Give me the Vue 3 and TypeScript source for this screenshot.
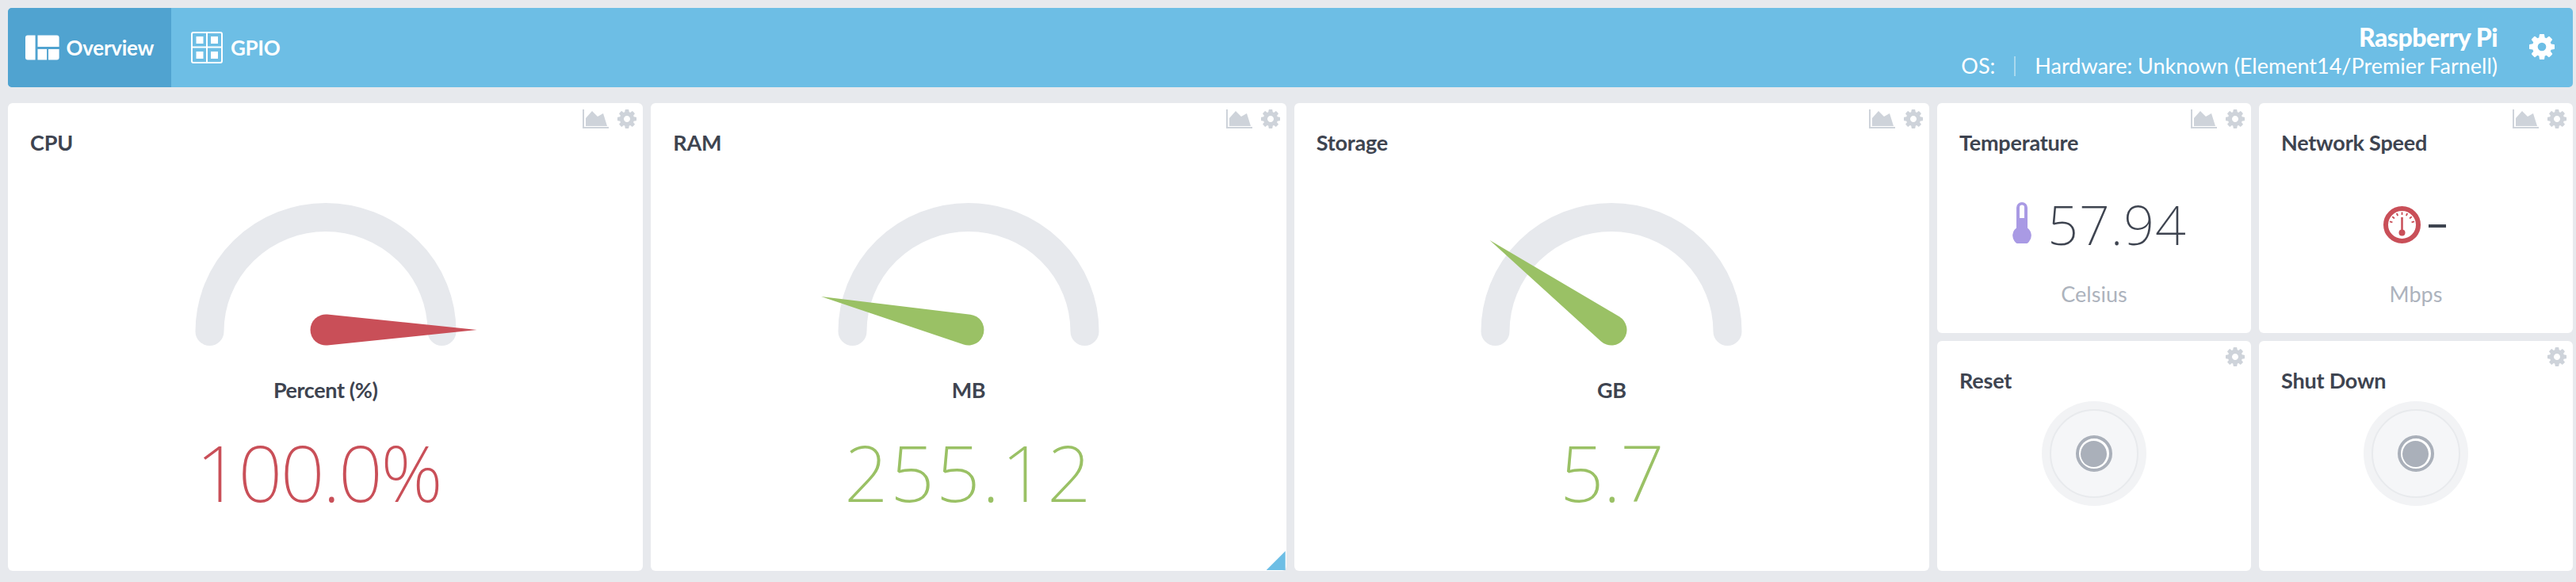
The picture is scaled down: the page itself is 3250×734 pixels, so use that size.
<script setup lang="ts">
const cog =
  'M1152 896q0-106-75-181t-181-75-181 75-75 181 75 181 181 75 181-75 75-181zm512-109v222q0 12-8 23t-20 13l-185 28q-19 54-39 91 35 50 107 138 10 12 10 25t-9 23q-27 37-99 108t-94 71q-12 0-26-9l-138-108q-44 23-91 38-16 136-29 186-7 28-36 28h-222q-14 0-24.500-8.500t-11.500-21.500l-28-184q-49-16-90-37l-141 107q-10 9-25 9-14 0-25-11-126-114-165-168-7-10-7-23 0-12 8-23 15-21 51-66.500t54-70.500q-27-50-41-99l-183-27q-13-2-21-12.500t-8-23.500v-222q0-12 8-23t19-13l186-28q14-46 39-92-40-57-107-138-10-12-10-24 0-10 9-23 26-36 98.500-107.500t94.500-71.500q13 0 26 10l138 107q44-23 91-38 16-136 29-186 7-28 36-28h222q14 0 24.500 8.500t11.500 21.500l28 184q49 16 90 37l142-107q9-9 24-9 13 0 25 10 129 119 165 170 7 8 7 22 0 12-8 23-15 21-51 66.500t-54 70.500q26 50 41 98l183 28q13 2 21 12.500t8 23.500z';

// tracking and nudge make up for the digit widths of the stand-in font
const gauges = [
  { title: 'CPU', unit: 'Percent (%)', value: '100.0%', angle: 0, color: '#c94f58', corner: false, tracking: -2.6, nudge: 18 },
  { title: 'RAM', unit: 'MB', value: '255.12', angle: 192.7, color: '#9ac165', corner: true, tracking: 2, nudge: 0 },
  { title: 'Storage', unit: 'GB', value: '5.7', angle: 216.4, color: '#9ac165', corner: false, tracking: -1, nudge: 0 }
];

const buttons = ['Reset', 'Shut Down'];

const dialTicks = [-75, -50, -25, 0, 25, 50, 75];
</script>

<template>
  <div class="page">
    <header class="topbar">
      <div class="tab tab_active">
        <svg class="tab_icon_overview" viewBox="0 0 44 32">
          <path d="M3 0h10v32H3a3 3 0 0 1-3-3V3a3 3 0 0 1 3-3z" />
          <path d="M16 0h25a3 3 0 0 1 3 3v12H16z" />
          <rect x="16" y="18" width="12" height="14" />
          <path d="M30 18h14v11a3 3 0 0 1-3 3H30z" />
        </svg>
        <span>Overview</span>
      </div>
      <div class="tab">
        <svg class="tab_icon_gpio" viewBox="0 0 40 40">
          <rect x="1" y="1" width="38" height="38" rx="2" fill="none" stroke="#fff" stroke-width="2" />
          <path d="M20 1v38M1 19.500h38" stroke="#fff" stroke-width="2" />
          <rect x="6.500" y="6" width="9" height="9" fill="#fff" />
          <rect x="25" y="6" width="9" height="9" fill="#fff" />
          <rect x="6.500" y="25" width="9" height="9" fill="#fff" />
          <rect x="25" y="25" width="9" height="9" fill="#fff" />
        </svg>
        <span>GPIO</span>
      </div>
      <div class="device">
        <div class="device_name">Raspberry Pi</div>
        <div class="device_meta">
          <span>OS:</span>
          <i class="device_sep"></i>
          <span>Hardware: Unknown (Element14/Premier Farnell)</span>
        </div>
      </div>
      <svg class="topbar_cog" viewBox="128 128 1536 1536"><path :d="cog" /></svg>
    </header>

    <main class="grid">
      <section v-for="g in gauges" :key="g.title" class="card card_big">
        <div class="tools">
          <svg class="tool_chart" viewBox="0 0 33 24">
            <path d="M0 0h2v22h31v2H0z" />
            <path d="M4 21V11l8-9 7 7 7-4 5 16z" />
          </svg>
          <svg class="tool_cog" viewBox="128 128 1536 1536"><path :d="cog" /></svg>
        </div>
        <h2 class="card_title">{{ g.title }}</h2>
        <svg class="gauge" viewBox="0 0 400 200">
          <path d="M53.500 172A146.500 144 0 0 1 346.500 172" fill="none" stroke="#e7e9ed" stroke-width="36" stroke-linecap="round" />
          <path
            d="M190.600 0L2 -19.400A19.500 19.500 0 1 0 2 19.400Z"
            :fill="g.color"
            :transform="`translate(200 170) rotate(${g.angle})`"
          />
        </svg>
        <div class="gauge_unit">{{ g.unit }}</div>
        <div
          class="gauge_value"
          :style="{ color: g.color, letterSpacing: `${g.tracking}px`, marginRight: `${g.nudge}px` }"
        >
          {{ g.value }}
        </div>
        <i v-if="g.corner" class="resize"></i>
      </section>

      <section class="card">
        <div class="tools">
          <svg class="tool_chart" viewBox="0 0 33 24">
            <path d="M0 0h2v22h31v2H0z" />
            <path d="M4 21V11l8-9 7 7 7-4 5 16z" />
          </svg>
          <svg class="tool_cog" viewBox="128 128 1536 1536"><path :d="cog" /></svg>
        </div>
        <h2 class="card_title">Temperature</h2>
        <div class="stat stat_temp">
          <svg class="stat_thermo" viewBox="0 0 24 52">
            <path d="M12 0a7 7 0 0 1 7 7v25.500a11.800 11.800 0 1 1-14 0V7a7 7 0 0 1 7-7z" fill="#a99ae4" />
            <path d="M9 20V6.500a3 3 0 0 1 6 0V20z" fill="#fff" />
          </svg>
          <span class="stat_value">57.94</span>
        </div>
        <div class="stat_unit">Celsius</div>
      </section>

      <section class="card">
        <div class="tools">
          <svg class="tool_chart" viewBox="0 0 33 24">
            <path d="M0 0h2v22h31v2H0z" />
            <path d="M4 21V11l8-9 7 7 7-4 5 16z" />
          </svg>
          <svg class="tool_cog" viewBox="128 128 1536 1536"><path :d="cog" /></svg>
        </div>
        <h2 class="card_title">Network Speed</h2>
        <div class="stat stat_net">
          <svg class="stat_dial" viewBox="0 0 47 47">
            <circle cx="23.500" cy="23.500" r="20.500" fill="none" stroke="#c94f58" stroke-width="6" />
            <path
              v-for="a in dialTicks"
              :key="a"
              d="M23.500 7.500v3.500"
              stroke="#c94f58"
              stroke-width="1.800"
              :transform="`rotate(${a} 23.500 23.500)`"
            />
            <path d="M23.500 14v18" stroke="#c94f58" stroke-width="2.500" />
            <circle cx="23.500" cy="33.500" r="4" fill="#c94f58" />
          </svg>
          <span class="stat_dash"></span>
        </div>
        <div class="stat_unit">Mbps</div>
      </section>

      <section v-for="b in buttons" :key="b" class="card">
        <div class="tools">
          <svg class="tool_cog" viewBox="128 128 1536 1536"><path :d="cog" /></svg>
        </div>
        <h2 class="card_title">{{ b }}</h2>
        <div class="push">
          <div class="push_inner">
            <div class="push_ring"><div class="push_dot"></div></div>
          </div>
        </div>
      </section>
    </main>
  </div>
</template>

<style>
html,
body {
  margin: 0;
  background: #e7e9ed;
}
</style>

<style scoped>
.page {
  box-sizing: border-box;
  width: 3250px;
  height: 734px;
  padding: 10px 4px 0 10px;
  background: #e7e9ed;
  font-family: Lato, 'Noto Sans', sans-serif;
  color: #3e4450;
  overflow: hidden;
}

.topbar {
  display: flex;
  align-items: stretch;
  height: 100px;
  background: #6dbee5;
  border-radius: 5px;
  overflow: hidden;
  color: #fff;
}

.tab {
  display: flex;
  align-items: center;
  padding: 0 22px;
  gap: 9px;
  font-size: 26px;
  font-weight: 700;
  letter-spacing: -0.3px;
}

.tab_active {
  width: 206px;
  box-sizing: border-box;
  background: #50a3d0;
}

.tab_icon_overview {
  width: 44px;
  height: 32px;
  fill: #fff;
}

.tab_icon_gpio {
  width: 40px;
  height: 40px;
  margin-left: 3px;
  margin-right: 1px;
}

.device {
  margin-left: auto;
  text-align: right;
  padding-top: 17px;
}

.device_name {
  font-size: 32px;
  font-weight: 900;
  line-height: 39px;
  letter-spacing: -0.5px;
}

.device_meta {
  display: flex;
  align-items: center;
  gap: 24px;
  font-size: 27px;
  line-height: 34px;
  font-weight: 400;
}

.device_sep {
  width: 2px;
  height: 25px;
  background: #a9d8ee;
}

.topbar_cog {
  width: 32px;
  height: 32px;
  margin: 33px 23px 0 40px;
  fill: #fff;
}

.grid {
  display: grid;
  grid-template-columns: repeat(3, 1fr) 396px 396px;
  grid-template-rows: 290px 290px;
  gap: 10px;
  margin-top: 20px;
}

.card {
  position: relative;
  box-sizing: border-box;
  background: #fff;
  border-radius: 6px;
  padding: 33px 28px 0;
  display: flex;
  flex-direction: column;
  align-items: center;
}

.card_big {
  grid-row: span 2;
}

.tools {
  position: absolute;
  top: 8px;
  right: 8px;
  display: flex;
  align-items: center;
  gap: 11px;
}

.tool_chart {
  width: 33px;
  height: 24px;
  fill: #ced3da;
}

.tool_cog {
  width: 24px;
  height: 24px;
  fill: #ced3da;
}

.card_title {
  align-self: flex-start;
  margin: 0;
  font-size: 27px;
  line-height: 34px;
  font-weight: 700;
  letter-spacing: -0.2px;
}

.gauge {
  width: 400px;
  height: 200px;
  margin-top: 49px;
  flex: none;
  overflow: visible;
}

.gauge_unit {
  margin-top: 29px;
  font-size: 27px;
  line-height: 34px;
  font-weight: 700;
  letter-spacing: -0.4px;
}

.gauge_value {
  margin-top: 28px;
  font-family: 'Noto Sans', sans-serif;
  font-size: 98px;
  line-height: 116px;
  font-weight: 200;
}

.resize {
  position: absolute;
  right: 1px;
  bottom: 1px;
  width: 24px;
  height: 24px;
  background: #6dbee5;
  clip-path: polygon(100% 0, 100% 100%, 0 100%);
}

.stat {
  display: flex;
  align-items: center;
  gap: 20px;
  height: 70px;
  margin-top: 51px;
}

.stat_temp {
  margin-left: 14px;
}

.stat_thermo {
  width: 24px;
  height: 52px;
  margin-top: -4px;
}

.stat_value {
  font-family: 'Noto Sans', sans-serif;
  font-size: 68px;
  line-height: 70px;
  font-weight: 200;
  letter-spacing: 1px;
}

.stat_net {
  gap: 10px;
  margin-left: -3px;
}

.stat_dial {
  width: 47px;
  height: 47px;
}

.stat_dash {
  width: 22px;
  height: 4px;
  margin-top: 3px;
  background: #3e4450;
}

.stat_unit {
  margin-top: 36px;
  font-size: 27px;
  line-height: 34px;
  color: #adb3bd;
}

.push {
  box-sizing: border-box;
  width: 132px;
  height: 132px;
  margin-top: 9px;
  padding: 10px;
  border-radius: 50%;
  background: #f2f3f5;
}

.push_inner {
  box-sizing: border-box;
  width: 112px;
  height: 112px;
  border: 2px solid #e8eaed;
  border-radius: 50%;
  background: #f5f6f8;
  display: flex;
  align-items: center;
  justify-content: center;
}

.push_ring {
  box-sizing: border-box;
  width: 46px;
  height: 46px;
  border: 4px solid #aab0ba;
  border-radius: 50%;
  padding: 2.500px;
  background: #fff;
}

.push_dot {
  width: 100%;
  height: 100%;
  border-radius: 50%;
  background: #aab0ba;
}
</style>
